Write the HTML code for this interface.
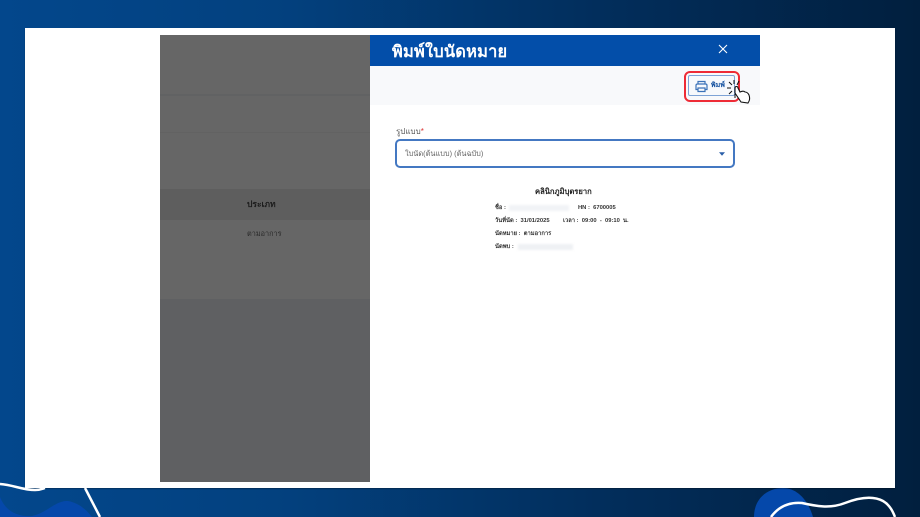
<!DOCTYPE html>
<html lang="th">
<head>
<meta charset="utf-8">
<style>
html,body{margin:0;padding:0;width:920px;height:517px;overflow:hidden}
body{position:relative;background:linear-gradient(90deg,#03478c 0%,#03417f 30%,#022e5c 65%,#011f3e 100%);font-family:"Liberation Sans","Noto Sans CJK SC","WenQuanYi Zen Hei",sans-serif}
.a{position:absolute;white-space:nowrap}
#card{left:25px;top:28px;width:870px;height:460px;background:#fff;box-shadow:0 1px 1px rgba(0,0,0,.3)}
.th{font-family:"Liberation Sans","Noto Sans CJK SC",sans-serif;filter:blur(.3px)}
</style>
</head>
<body>
<svg class="a" style="left:0;top:0" width="920" height="517" viewBox="0 0 920 517">
<path d="M0 497C5 510 16 517 32 516C48 513 58 497 72 502C82 505 89 513 92 517H0Z" fill="#0548aa"/>
<path d="M754 517C754 498 768 488 783 488C797 488 808 500 813 517Z" fill="#0548aa"/>
</svg>
<div id="card" class="a"></div>
<svg class="a" style="left:0;top:0" width="920" height="517" viewBox="0 0 920 517" fill="none" stroke="#fff">
<path d="M0 484C14 485 22 490 35 490C40 490 42 489 45 488" stroke-width="2.5"/>
<path d="M85 488L100 517" stroke-width="2.5"/>
<path d="M771 517C779 506 790 502 802 503C815 506 830 509 845 503C858 498 872 495 883 501C890 505 893 512 895 517" stroke-width="2.5"/>
</svg>

<!-- left panel -->
<div class="a" style="left:160px;top:35px;width:210px;height:447px;background:#666"></div>
<div class="a" style="left:160px;top:94px;width:210px;height:2px;background:#616263"></div>
<div class="a" style="left:160px;top:132px;width:210px;height:1px;background:#626262"></div>
<div class="a" style="left:160px;top:189px;width:210px;height:31px;background:#5e5e5e"></div>
<div class="a" style="left:160px;top:299px;width:210px;height:183px;background:#5f6062"></div>
<div class="a th" style="left:247px;top:198px;font-size:8.5px;line-height:12px;font-weight:bold;color:#1c1c1c">ประเภท</div>
<div class="a th" style="left:247px;top:228px;font-size:7.3px;line-height:12px;color:#2a2a2a">ตามอาการ</div>

<!-- drawer -->
<div class="a" style="left:370px;top:35px;width:390px;height:31px;background:#034ea9"></div>
<div class="a th" style="left:392px;top:41px;font-size:16.4px;line-height:22px;font-weight:bold;color:#fff;letter-spacing:.2px">พิมพ์ใบนัดหมาย</div>
<svg class="a" style="left:718px;top:44px" width="10" height="10" viewBox="0 0 10 10"><path d="M1 1L9 9M9 1L1 9" stroke="#fff" stroke-width="1.1"/></svg>
<div class="a" style="left:370px;top:66px;width:390px;height:39px;background:#f8f9fb"></div>

<!-- print button -->
<div class="a" style="left:684px;top:71px;box-sizing:content-box;width:52px;height:27px;border:2px solid #ee2b36;border-radius:6px"></div>
<div class="a" style="left:688px;top:75px;height:21px;box-sizing:border-box;border:1px solid #7ea3d6;border-radius:2px;background:#f7f9fc;width:47px"></div>
<svg class="a" style="left:695px;top:80px" width="13" height="13" viewBox="0 0 13 13" fill="none" stroke="#3b72b8" stroke-width="1.2">
<path d="M3 4V1.5H10V4M3 9.5H1V5.5Q1 4 2.5 4H10.5Q12 4 12 5.5V9.5H10M3 8H10V11.5H3Z"/>
</svg>
<div class="a th" style="left:711px;top:80px;font-size:7px;line-height:11px;font-weight:bold;color:#124f9e">พิมพ์</div>
<!-- hand cursor -->
<svg class="a" style="left:726px;top:78px" width="28" height="28" viewBox="0 0 28 28" fill="none">
<path d="M8 2V6M3 4L6 7M1 10H5M3 16L6 13M13 3L11 7M9 16V20M13 14L15 16" stroke="#111" stroke-width="1"/>
<path d="M9 10C9 8 12 8 12 10L14 14C16 13 18 13 19 14C21 14 22 15 23 17C24 20 24 22 22 25L15 24C13 21 11 18 9 15Z" fill="#fff" stroke="#111" stroke-width="1.1"/>
</svg>

<!-- select -->
<div class="a th" style="left:396px;top:126px;font-size:8px;line-height:12px;color:#555">รูปแบบ<span style="color:#d33">*</span></div>
<div class="a" style="left:395px;top:139px;width:340px;height:29px;box-sizing:border-box;border:2px solid #4478c2;border-radius:5px;background:#fff"></div>
<div class="a th" style="left:405px;top:148px;font-size:7.4px;line-height:12px;color:#666">ใบนัด(ต้นแบบ) (ต้นฉบับ)</div>
<svg class="a" style="left:719px;top:152px" width="6" height="4" viewBox="0 0 7 4"><path d="M0 0H7L3.5 4Z" fill="#2b5fa8"/></svg>

<!-- preview -->
<div class="a th" style="left:535px;top:186px;font-size:7.6px;line-height:12px;font-weight:bold;color:#222">คลินิกภูมิบุตรยาก</div>
<div class="a th" style="left:495px;top:203px;font-size:5.8px;line-height:11px;font-weight:bold;color:#333">ชื่อ :</div>
<div class="a" style="left:509px;top:205px;width:60px;height:6px;background:#f1f3f6;filter:blur(1px)"></div>
<div class="a th" style="left:578px;top:203px;font-size:5.8px;line-height:11px;font-weight:bold;color:#333">HN : &nbsp;6700005</div>
<div class="a th" style="left:495px;top:216px;font-size:5.8px;line-height:11px;font-weight:bold;color:#333">วันที่นัด : &nbsp;31/01/2025</div>
<div class="a th" style="left:563px;top:216px;font-size:5.8px;line-height:11px;font-weight:bold;color:#333">เวลา : &nbsp;09:00 &nbsp;- &nbsp;09:10 &nbsp;น.</div>
<div class="a th" style="left:495px;top:229px;font-size:5.8px;line-height:11px;font-weight:bold;color:#333">นัดหมาย : &nbsp;ตามอาการ</div>
<div class="a th" style="left:495px;top:242px;font-size:5.8px;line-height:11px;font-weight:bold;color:#333">นัดพบ :</div>
<div class="a" style="left:518px;top:244px;width:55px;height:6px;background:#eff1f4;filter:blur(1px)"></div>
</body>
</html>
